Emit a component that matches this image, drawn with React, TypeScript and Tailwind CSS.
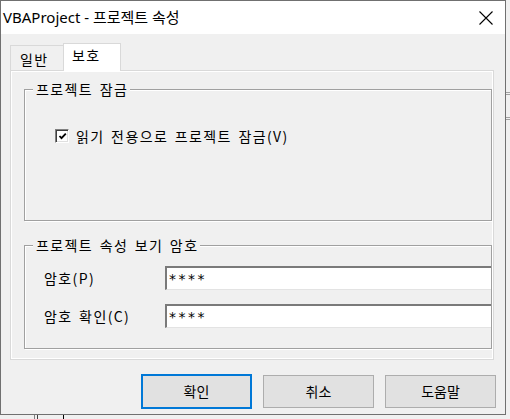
// VBA 프로젝트 속성 대화상자 — 보호 탭
const UI = "font-['Noto_Sans','Noto_Sans_CJK_KR',sans-serif]";
const GUL = "font-['Noto_Sans_CJK_KR',sans-serif] text-[14px] leading-[16px] tracking-[1.4px] [word-spacing:2px]";

function GroupBox({ label, className, children }: { label: string; className: string; children: React.ReactNode }) {
  return (
    <div className={`relative border border-[#a0a0a0] shadow-[1px_1px_0_#fff,inset_1px_1px_0_#fff] ${className}`}>
      <span className={`absolute left-[8px] top-[-9px] bg-[#f0f0f0] pl-[3px] pr-[2px] text-black ${GUL}`}>{label}</span>
      {children}
    </div>
  );
}

function TextBox({ value }: { value: string }) {
  return (
    <div className="flex h-[24px] flex-1 items-center border-t-2 border-l-2 border-t-[#7a7a7a] border-l-[#7a7a7a] border-b border-b-[#e3e3e3] bg-white pl-[2px]">
      <span className="font-['DejaVu_Sans',sans-serif] text-[14px] leading-none tracking-[2.5px] text-black">{value}</span>
    </div>
  );
}

function Button({ label, primary }: { label: string; primary?: boolean }) {
  return (
    <button
      className={`flex w-[111px] items-center justify-center bg-[#e1e1e1] text-[14px] text-black ${UI} ${
        primary ? "h-[35px] border-2 border-[#0078d7]" : "h-[33px] border border-[#adadad]"
      }`}
    >
      {label}
    </button>
  );
}

export default function App() {
  return (
    <div className="flex h-[419px] w-[510px] flex-col bg-[#f0f0f0]">
      <div className="flex">
        {/* 대화상자 */}
        <div className="flex h-[415px] w-[506px] flex-col border border-[#707070] bg-[#f0f0f0]">
          {/* 제목 표시줄 */}
          <div className="flex h-[33px] items-center justify-between bg-white pl-[2px] pr-[12px]">
            <span className={`text-[15px] text-black ${UI}`}>VBAProject - 프로젝트 속성</span>
            <svg width="14" height="14" viewBox="0 0 14 14">
              <path d="M0.5 0.5 L13.5 13.5 M13.5 0.5 L0.5 13.5" stroke="#000" strokeWidth="1.1" fill="none" />
            </svg>
          </div>

          <div className="flex flex-1 flex-col px-[9px] pt-[9px]">
            {/* 탭 */}
            <div className="flex h-[27px] items-end">
              <div className="flex h-[25px] w-[53px] items-center justify-start border-t border-l border-[#d9d9d9] pl-[9px] pt-[2px]">
                <span className={`text-black ${GUL}`}>일반</span>
              </div>
              <div className="relative z-10 -mb-[1px] flex h-[28px] w-[58px] items-start border-x border-t border-[#d9d9d9] bg-white pl-[8px] pt-[3px]">
                <span className={`text-black ${GUL}`}>보호</span>
              </div>
            </div>

            {/* 탭 패널 */}
            <div className="h-[290px] w-[484px] border border-[#d9d9d9]">
              <div className="flex h-full flex-col border border-white pl-[12px] pt-[17px]">
                <GroupBox label="프로젝트 잠금" className="h-[132px]">
                  <div className="flex items-center pl-[30px] pt-[38px]">
                    <div className="flex h-[14px] w-[14px] items-center justify-center border border-t-[#808080] border-l-[#808080] border-b-white border-r-white bg-white shadow-[inset_1px_1px_0_#404040,inset_-1px_-1px_0_#dfdfdf]">
                      <svg width="9" height="9" viewBox="0 0 9 9">
                        <path d="M1.5 4 L3.5 6.2 L7.8 1.6" stroke="#000" strokeWidth="1.8" fill="none" />
                      </svg>
                    </div>
                    <span className={`ml-[7px] text-black ${GUL}`}>읽기 전용으로 프로젝트 잠금(V)</span>
                  </div>
                </GroupBox>

                <GroupBox label="프로젝트 속성 보기 암호" className="mt-[24px] h-[104px]">
                  <div className="flex flex-col gap-[14px] pl-[19px] pt-[20px]">
                    <div className="flex items-center">
                      <span className={`w-[121px] text-black ${GUL}`}>암호(P)</span>
                      <TextBox value="****" />
                    </div>
                    <div className="flex items-center">
                      <span className={`w-[121px] text-black ${GUL}`}>암호 확인(C)</span>
                      <TextBox value="****" />
                    </div>
                  </div>
                </GroupBox>
              </div>
            </div>

            {/* 버튼 */}
            <div className="mt-[14px] flex items-center justify-end gap-[11px]">
              <Button label="확인" primary />
              <Button label="취소" />
              <Button label="도움말" />
            </div>
          </div>
        </div>

        {/* 뒤 창 가장자리 */}
        <div className="flex flex-1 flex-col pt-[92px]">
          <div className="h-[1px] bg-[#a0a0a0]" />
          <div className="mt-[1px] h-[1px] bg-[#a0a0a0]" />
          <div className="mt-[22px] h-[1px] bg-[#a0a0a0]" />
          <div className="mt-[1px] h-[1px] bg-[#a0a0a0]" />
        </div>
      </div>
      <div className="flex h-[4px] bg-[#f0f0f0] pl-[34px]">
        <div className="w-[1px] bg-[#808080]" />
        <div className="ml-[2px] w-[1px] bg-[#404040]" />
        <div className="ml-[25px] w-[1px] bg-black" />
      </div>
    </div>
  );
}
